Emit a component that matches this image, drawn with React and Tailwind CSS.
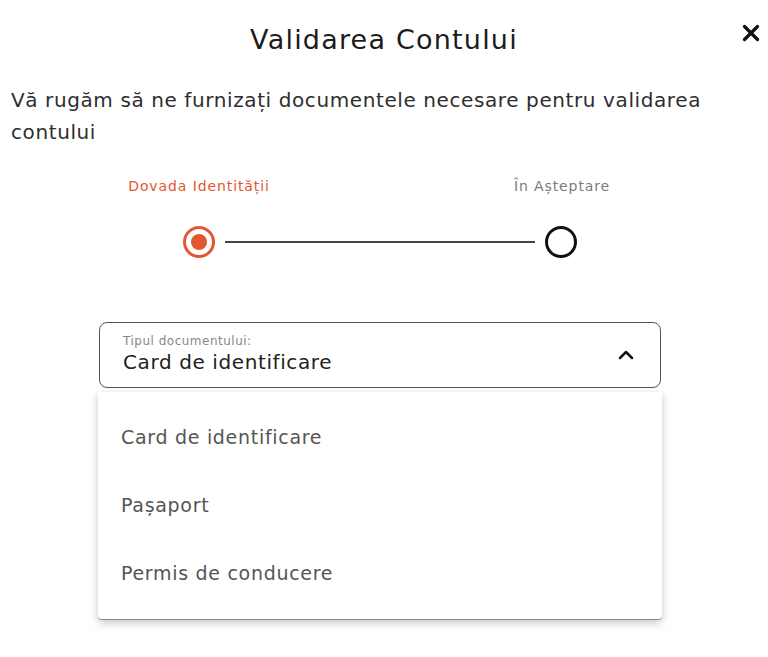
import { X, ChevronUp } from "lucide-react";

const options = ["Card de identificare", "Pașaport", "Permis de conducere"];

export default function App() {
  return (
    <div
      className="w-[768px] h-[657px] bg-white overflow-hidden"
      style={{ fontFamily: '"DejaVu Sans", "Noto Sans", sans-serif' }}
    >
      {/* header */}
      <div className="relative flex justify-center pt-[20px]">
        <h1 className="text-[27px] leading-[40px] tracking-[1.2px] text-[#1c1c1c]">
          Validarea Contului
        </h1>
        <button className="absolute right-[4px] top-[20px] text-[#111]">
          <X size={26} strokeWidth={3} />
        </button>
      </div>

      <p className="mt-[24px] pl-[11px] pr-[48px] text-[20px] leading-[32px] tracking-[0.6px] text-[#2e2e2e]">
        Vă rugăm să ne furnizați documentele necesare pentru validarea contului
      </p>

      {/* stepper */}
      <div className="mt-[28px]">
        <div className="ml-[124px] w-[513px] flex justify-between text-[14px] leading-[20px] tracking-[0.9px]">
          <span className="w-[150px] text-center text-[#e4572e]">Dovada Identității</span>
          <span className="w-[150px] text-center text-[#7a7a7a]">În Așteptare</span>
        </div>
        <div className="ml-[183px] mt-[30px] flex items-center gap-[10px]">
          <div className="w-[32px] h-[32px] rounded-full border-[3px] border-[#e4572e] flex items-center justify-center">
            <div className="w-[16px] h-[16px] rounded-full bg-[#e4572e]" />
          </div>
          <div className="w-[310px] h-[2px] bg-[#444]" />
          <div className="w-[32px] h-[32px] rounded-full border-[3px] border-[#111]" />
        </div>
      </div>

      {/* select */}
      <div className="mt-[64px] ml-[98px] w-[564px]">
        <div className="mx-[1px] h-[66px] rounded-lg border-[1.5px] border-[#555] flex items-center justify-between pl-[23px] pr-[22px]">
          <div className="flex flex-col">
            <span className="text-[12px] leading-[14px] text-[#888] tracking-[0.5px]">
              Tipul documentului:
            </span>
            <span className="text-[20px] leading-[28px] tracking-[0.6px] text-[#222]">
              Card de identificare
            </span>
          </div>
          <ChevronUp size={24} strokeWidth={2.5} className="text-[#111]" />
        </div>

        <ul className="mt-[4px] pt-[11px] pb-[12px] bg-white shadow-[0_3px_10px_rgba(0,0,0,0.22)] border-b border-[#888] rounded-b-sm">
          {options.map((o) => (
            <li
              key={o}
              className="h-[68px] flex items-center px-[23px] text-[19px] tracking-[0.7px] text-[#555]"
            >
              {o}
            </li>
          ))}
        </ul>
      </div>
    </div>
  );
}
